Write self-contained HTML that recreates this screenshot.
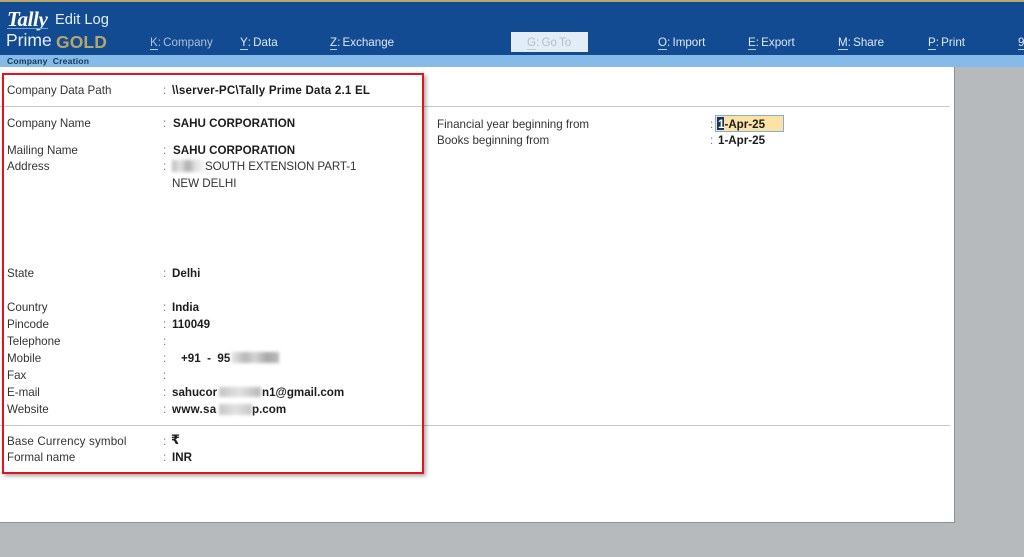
<!DOCTYPE html>
<html><head><meta charset="utf-8"><style>
html,body{margin:0;padding:0}
body{width:1024px;height:557px;position:relative;overflow:hidden;background:#b6babd;font-family:"Liberation Sans",sans-serif;color:#2b2b2b;font-size:11.6px}
#p{position:absolute;left:0;top:0;width:1024px;height:557px;filter:blur(.3px)}
.a{position:absolute;white-space:pre;line-height:14px;margin-top:1px}
.l{left:7px;color:#333}
.c{left:163px;color:#777}
.b{font-weight:bold;color:#1c1c1c}
.m{top:35px;color:#dfe8f2;font-size:11.6px;word-spacing:-1px}
.m u{text-decoration:none;border-bottom:1px solid #b8cde6;padding-bottom:0;display:inline-block;line-height:13px}
.hr{position:absolute;height:1px;background:#c8c8c8}
.blur{position:absolute;filter:blur(1.5px)}
</style></head><body><div id="p">
<div style="position:absolute;left:0;top:0;width:1024px;height:2px;background:#b9a869"></div>
<div style="position:absolute;left:0;top:2px;width:1024px;height:53px;background:#134b92"></div>
<div style="position:absolute;left:0;top:55px;width:1024px;height:12px;background:#86bae8"></div>
<div style="position:absolute;left:0;top:67px;width:955px;height:456px;background:#fff;box-sizing:border-box;border-right:1px solid #8d9295;border-bottom:1px solid #8d9295"></div>

<div class="a" style="left:7px;top:7px;font:italic bold 21px/22px 'Liberation Serif',serif;color:#fff;letter-spacing:-.4px">Tally</div>
<div style="position:absolute;left:7px;top:28px;width:41px;height:1px;background:#6fa5d8"></div>
<div class="a" style="left:55px;top:11px;font-size:14.7px;line-height:17px;color:#e6edf5">Edit Log</div>
<div class="a" style="left:6px;top:29px;font-size:17.5px;line-height:20px;color:#e6edf5">Prime</div>
<div class="a" style="left:56px;top:31px;font-size:17.5px;line-height:20px;font-weight:bold;color:#b5a66b;letter-spacing:.1px">GOLD</div>

<div class="a m" style="left:150px;color:#aebfd6"><u>K</u>: Company</div>
<div class="a m" style="left:240px"><u>Y</u>: Data</div>
<div class="a m" style="left:330px"><u>Z</u>: Exchange</div>
<div style="position:absolute;left:511px;top:32px;width:77px;height:20px;background:#e2edf8"></div>
<div class="a m" style="left:527px;color:#b4bec8"><u>G</u>: Go To</div>
<div class="a m" style="left:658px"><u>O</u>: Import</div>
<div class="a m" style="left:748px"><u>E</u>: Export</div>
<div class="a m" style="left:838px"><u>M</u>: Share</div>
<div class="a m" style="left:928px"><u>P</u>: Print</div>
<div class="a m" style="left:1018px"><u>9</u></div>

<div class="a b" style="left:7px;top:54px;font-size:8.6px;line-height:12px;color:#123a5f;letter-spacing:.2px">Company  Creation</div>

<div class="hr" style="left:0;top:106px;width:950px"></div>
<div class="hr" style="left:0;top:425px;width:950px"></div>

<div class="a l" style="top:83px">Company Data Path</div><div class="a c" style="top:83px">:</div><div class="a b" style="left:172px;top:83px;letter-spacing:.2px">\\server-PC\Tally Prime Data 2.1 EL</div>
<div class="a l" style="top:116px">Company Name</div><div class="a c" style="top:116px">:</div><div class="a b" style="left:173px;top:116px">SAHU CORPORATION</div>
<div class="a l" style="top:143px">Mailing Name</div><div class="a c" style="top:143px">:</div><div class="a b" style="left:173px;top:143px">SAHU CORPORATION</div>
<div class="a l" style="top:159px">Address</div><div class="a c" style="top:159px">:</div>
<div class="blur" style="left:172px;top:160px;width:32px;height:12px;opacity:.8;background:linear-gradient(90deg,#a8a8a8 0,#ddd 25%,#999 50%,#ddd 75%,#f0f0f0 100%)"></div>
<div class="a" style="left:205px;top:159px;color:#333;letter-spacing:-.1px">SOUTH EXTENSION PART-1</div>
<div class="a" style="left:172px;top:176px;color:#333">NEW DELHI</div>
<div class="a l" style="top:266px">State</div><div class="a c" style="top:266px">:</div><div class="a b" style="left:172px;top:266px">Delhi</div>
<div class="a l" style="top:300px">Country</div><div class="a c" style="top:300px">:</div><div class="a b" style="left:172px;top:300px">India</div>
<div class="a l" style="top:317px">Pincode</div><div class="a c" style="top:317px">:</div><div class="a b" style="left:172px;top:317px">110049</div>
<div class="a l" style="top:334px">Telephone</div><div class="a c" style="top:334px">:</div>
<div class="a l" style="top:351px">Mobile</div><div class="a c" style="top:351px">:</div><div class="a b" style="left:181px;top:351px">+91  -  95</div>
<div class="blur" style="left:231px;top:352px;width:48px;height:11px;opacity:.85;background:linear-gradient(90deg,#e4e4e4,#aaa 30%,#ccc 50%,#999 75%,#aaa 95%)"></div>
<div class="a l" style="top:368px">Fax</div><div class="a c" style="top:368px">:</div>
<div class="a l" style="top:385px">E-mail</div><div class="a c" style="top:385px">:</div><div class="a b" style="left:172px;top:385px">sahucor</div><div class="a b" style="left:262px;top:385px">n1@gmail.com</div>
<div class="blur" style="left:219px;top:387px;width:42px;height:10px;opacity:.85;background:linear-gradient(90deg,#bbb,#ddd 50%,#aaa)"></div>
<div class="a l" style="top:402px">Website</div><div class="a c" style="top:402px">:</div><div class="a b" style="left:172px;top:402px;letter-spacing:.3px">www.sa</div><div class="a b" style="left:252px;top:402px">p.com</div>
<div class="blur" style="left:219px;top:404px;width:33px;height:11px;opacity:.85;background:linear-gradient(90deg,#bbb,#ddd 50%,#bbb)"></div>
<div class="a l" style="top:434px;letter-spacing:.15px">Base Currency symbol</div><div class="a c" style="top:434px">:</div><div class="a b" style="left:171px;top:433px;font-size:13px;font-family:'DejaVu Sans',sans-serif">₹</div>
<div class="a l" style="top:450px">Formal name</div><div class="a c" style="top:450px">:</div><div class="a b" style="left:172px;top:450px">INR</div>

<div class="a l" style="left:437px;top:117px">Financial year beginning from</div><div class="a c" style="left:710px;top:117px">:</div>
<div class="a l" style="left:437px;top:133px">Books beginning from</div><div class="a c" style="left:710px;top:133px">:</div>
<div style="position:absolute;left:715px;top:115px;width:69px;height:17px;box-sizing:border-box;background:#fde2a6;border:1px solid #7fb1d3"></div>
<div style="position:absolute;left:717px;top:117px;width:7px;height:13px;background:#14336b"></div>
<div class="a b" style="left:718px;top:117px"><span style="color:#fff">1</span>-Apr-25</div>
<div class="a b" style="left:718px;top:133px">1-Apr-25</div>

<div style="position:absolute;left:2px;top:73px;width:422px;height:401px;box-sizing:border-box;border:2px solid #e0141c;box-shadow:2px 2px 4px rgba(0,0,0,.35)"></div>
</div></body></html>
